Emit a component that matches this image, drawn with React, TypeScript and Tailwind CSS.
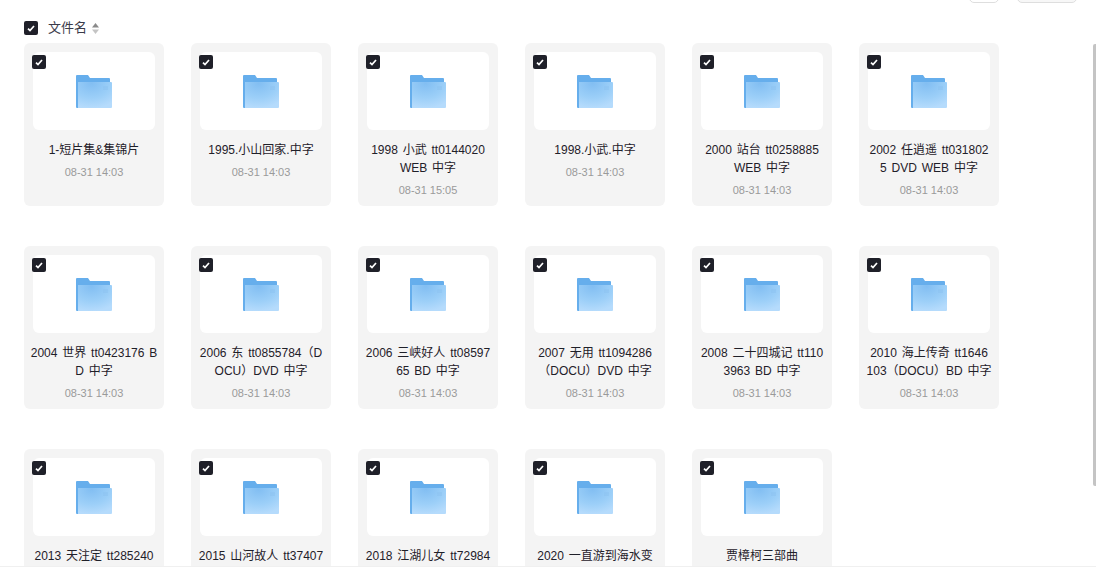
import React from 'react';

const font = { fontFamily: '"Liberation Sans", "Noto Sans CJK SC", sans-serif' };

interface FileItem {
  lines: string[];
  time?: string;
}

const files: FileItem[] = [
  { lines: ['1-短片集&集锦片'], time: '08-31 14:03' },
  { lines: ['1995.小山回家.中字'], time: '08-31 14:03' },
  { lines: ['1998 小武 tt0144020', 'WEB 中字'], time: '08-31 15:05' },
  { lines: ['1998.小武.中字'], time: '08-31 14:03' },
  { lines: ['2000 站台 tt0258885', 'WEB 中字'], time: '08-31 14:03' },
  { lines: ['2002 任逍遥 tt031802', '5 DVD WEB 中字'], time: '08-31 14:03' },
  { lines: ['2004 世界 tt0423176 B', 'D 中字'], time: '08-31 14:03' },
  { lines: ['2006 东 tt0855784（D', 'OCU）DVD 中字'], time: '08-31 14:03' },
  { lines: ['2006 三峡好人 tt08597', '65 BD 中字'], time: '08-31 14:03' },
  { lines: ['2007 无用 tt1094286', '（DOCU）DVD 中字'], time: '08-31 14:03' },
  { lines: ['2008 二十四城记 tt110', '3963 BD 中字'], time: '08-31 14:03' },
  { lines: ['2010 海上传奇 tt1646', '103（DOCU）BD 中字'], time: '08-31 14:03' },
  // last row runs under the bottom edge, only the first line shows
  { lines: ['2013 天注定 tt285240'] },
  { lines: ['2015 山河故人 tt37407'] },
  { lines: ['2018 江湖儿女 tt72984'] },
  { lines: ['2020 一直游到海水变'] },
  { lines: ['贾樟柯三部曲'] },
];

const Check = () => (
  <span className="flex h-[14px] w-[14px] items-center justify-center rounded-[2px] bg-[#1f2029]">
    <svg width="8" height="7" viewBox="0 0 8 7" fill="none">
      <path d="M1 3.6 3 5.6 7 1" stroke="#fff" strokeWidth="1.7" />
    </svg>
  </span>
);

const FolderIcon = () => (
  <svg width="36" height="33" viewBox="0 0 36 33">
    <defs>
      <radialGradient id="folderFill" cx="0.4" cy="0.05" r="0.95">
        <stop offset="0" stopColor="#82bef2" />
        <stop offset="0.6" stopColor="#9ccff8" />
        <stop offset="1" stopColor="#b5dbfc" />
      </radialGradient>
    </defs>
    <path d="M0 1a1 1 0 0 1 1-1h11l2 3h19a1 1 0 0 1 1 1v4H2v25H1a1 1 0 0 1-1-1z" fill="#66aeec" />
    <path d="M2 7h33a1 1 0 0 1 1 1v24a1 1 0 0 1-1 1H2z" fill="url(#folderFill)" />
    <path d="M27 12h5M27 14h5" stroke="#8cc2f0" strokeWidth="1" />
  </svg>
);

const FileCard = ({ item }: { item: FileItem }) => (
  <div className="relative flex h-[163px] w-[140px] flex-col items-center rounded-[6px] bg-[#f4f4f4] px-[9px] pt-[9px]">
    <div className="absolute left-[8px] top-[12px]">
      <Check />
    </div>
    <div className="flex h-[78px] w-full items-center justify-center rounded-[6px] bg-white pt-px">
      <FolderIcon />
    </div>
    <div className="mt-[11px] flex flex-col items-center gap-0 whitespace-nowrap text-[12px] leading-[18px] text-[#1f2029] [word-spacing:1.5px]">
      {item.lines.map((line) => (
        <span key={line}>{line}</span>
      ))}
    </div>
    {item.time && <div className="mt-[4px] text-[11px] leading-[18px] text-[#9a9a9a]">{item.time}</div>}
  </div>
);

export default function App() {
  return (
    <div className="relative flex h-[579px] w-[1096px] flex-col overflow-hidden bg-white" style={font}>
      {/* toolbar buttons, cut off by the top of the window */}
      <div className="flex h-[3px] items-end justify-end gap-[18px] overflow-hidden pr-[19px]">
        <div className="h-[13px] w-[30px] shrink-0 rounded-[5px] border border-[#dedede]" />
        <div className="h-[13px] w-[60px] shrink-0 rounded-[5px] border border-[#dedede] bg-[#f7f7f7]" />
      </div>

      <div className="h-[563px] overflow-hidden pl-[24px] pt-[18px]">
        <div className="flex h-[14px] items-center">
          <Check />
          <span className="ml-[10px] text-[13px] text-[#3a3b4a]">文件名</span>
          <svg className="ml-[5px]" width="7" height="11" viewBox="0 0 7 11">
            <path d="M3.5 0 7 4.5H0z" fill="#8a8a8a" />
            <path d="M3.5 11 0 6.5h7z" fill="#c4c4c4" />
          </svg>
        </div>
        <div className="mt-[8px] grid grid-cols-[repeat(6,140px)] gap-x-[27px] gap-y-[40px]">
          {files.map((item) => (
            <FileCard key={item.lines[0]} item={item} />
          ))}
        </div>
      </div>
      <div className="h-px bg-[#f0f0f0]" />

      {/* scrollbar thumb */}
      <div className="absolute right-0 top-[44px] h-[442px] w-[3px] rounded-l-[2px] bg-[#c4c4c4]" />
    </div>
  );
}
